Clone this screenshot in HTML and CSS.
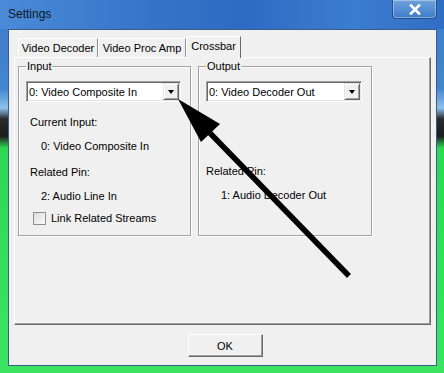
FILE: index.html
```html
<!DOCTYPE html>
<html lang="en">
<head>
  <meta charset="UTF-8">
  <title>Settings</title>
  <link rel="stylesheet" href="styles.css">
</head>
<body>
  <div class="window">
    <div class="titlebar">
      <span class="title">Settings</span>
      <div class="close">
        <svg width="14" height="11" viewBox="0 0 14 11">
          <path d="M3 1.5 L11 9.5 M11 1.5 L3 9.5" stroke="#fff" stroke-width="2.6" stroke-linecap="square"/>
        </svg>
      </div>
    </div>

    <div class="client">
      <div class="tabs">
        <div class="tab tab-decoder">Video Decoder</div>
        <div class="tab tab-proc">Video Proc Amp</div>
        <div class="tab tab-crossbar active">Crossbar</div>
      </div>

      <div class="panel">
        <fieldset class="group group-input">
          <legend>Input</legend>
          <div class="combo">
            <span class="combo-text">0: Video Composite In</span>
            <span class="combo-btn"><i class="caret"></i></span>
          </div>
          <div class="label first">Current Input:</div>
          <div class="value">0: Video Composite In</div>
          <div class="label">Related Pin:</div>
          <div class="value">2: Audio Line In</div>
          <label class="check">
            <span class="box"></span>
            Link Related Streams
          </label>
        </fieldset>

        <fieldset class="group group-output">
          <legend>Output</legend>
          <div class="combo">
            <span class="combo-text">0: Video Decoder Out</span>
            <span class="combo-btn"><i class="caret"></i></span>
          </div>
          <div class="label spaced">Related Pin:</div>
          <div class="value">1: Audio Decoder Out</div>
        </fieldset>
      </div>

      <div class="buttons">
        <button class="ok">OK</button>
      </div>
    </div>

    <!-- annotation arrow drawn over the dialog -->
    <svg class="arrow" width="444" height="373" viewBox="0 0 444 373">
      <line x1="349" y1="276" x2="207" y2="130" stroke="#000" stroke-width="5.5"/>
      <polygon points="178,99 220,124 201,142" fill="#000"/>
    </svg>
  </div>
</body>
</html>
```

FILE: styles.css
```css
body {
  margin: 0;
  font-family: 'Liberation Sans', Arial, sans-serif;
  font-size: 11px;
  color: #000;
}

.window {
  position: relative;
  width: 444px;
  height: 373px;
  overflow: hidden;
  background: linear-gradient(to bottom, #3d7ccc 0, #4384d0 88px, #8ec1ea 108px, #2a2a2a 119px, #1c1c1c 136px, #2fd853 148px, #3ae362 100%);
}

.titlebar {
  height: 29px;
  display: flex;
  justify-content: space-between;
  align-items: flex-start;
  background: linear-gradient(to right, #4a8ad7 0, #3474c8 35%, #2d6bc2 55%, #3b7dd0 80%, #2f6ec4 100%);
}

.title {
  padding: 7px 0 0 8px;
  font-size: 12px;
  line-height: 15px;
  color: #0b1626;
}

.close {
  width: 43px;
  height: 18px;
  margin-right: 7px;
  display: flex;
  align-items: center;
  justify-content: center;
  border: 1px solid #234f8c;
  border-top: none;
  border-radius: 0 0 4px 4px;
  background: linear-gradient(to bottom, #6fa2dc, #3e7bc9);
  box-shadow: inset 0 0 0 1px rgba(255, 255, 255, 0.35);
}

.client {
  box-sizing: border-box;
  width: 429px;
  height: 337px;
  margin-left: 8px;
  padding: 0 5px;
  background: #f0f0f0;
  border: 1px solid #3a5d88;
}

.tabs {
  display: flex;
  align-items: flex-end;
  height: 21px;
  margin: 6px 0 0 4px;
  position: relative;
  z-index: 1;
}

.tab {
  box-sizing: border-box;
  height: 19px;
  line-height: 19px;
  text-align: center;
  border-top: 1px solid #fff;
  border-left: 1px solid #fff;
  border-right: 1px solid #8e8e8e;
  white-space: nowrap;
}

.tab-decoder { width: 80px; }
.tab-proc { width: 88px; }
.tab-crossbar { width: 55px; }

.tab.active {
  height: 22px;
  line-height: 19px;
  margin-bottom: -1px;
  background: #f0f0f0;
  border-right-color: #696969;
}

.panel {
  box-sizing: border-box;
  height: 268px;
  display: flex;
  align-items: flex-start;
  gap: 7px;
  padding: 2px 0 0 3px;
  border-top: 1px solid #fff;
  border-left: 1px solid #fff;
  border-right: 1px solid #696969;
  border-bottom: 1px solid #696969;
  box-shadow: inset -1px -1px 0 #a0a0a0;
}

.group {
  box-sizing: border-box;
  height: 176px;
  margin: 0;
  padding: 0 7px;
  border: 1px solid #a3a3a3;
  box-shadow: inset 1px 1px 0 #fff, 1px 1px 0 #fff;
}

.group-input { width: 173px; }
.group-output { width: 174px; }

.group legend {
  padding: 0 1px;
  margin-left: 0;
  line-height: 13px;
  background: #f0f0f0;
}

.combo {
  box-sizing: border-box;
  display: flex;
  align-items: center;
  height: 21px;
  margin-top: 8px;
  background: #fff;
  border: 1px solid;
  border-color: #a0a0a0 #fff #fff #a0a0a0;
  box-shadow: inset 1px 1px 0 #696969, inset -1px -1px 0 #e3e3e3;
}

.group-input .combo { width: 155px; }
.group-output .combo { width: 156px; }

.combo-text {
  flex: 1;
  padding-left: 2px;
  white-space: nowrap;
}

.combo-btn {
  box-sizing: border-box;
  width: 16px;
  height: 17px;
  margin-right: 1px;
  display: flex;
  align-items: center;
  justify-content: center;
  background: #f0f0f0;
  border: 1px solid;
  border-color: #e3e3e3 #696969 #696969 #e3e3e3;
  box-shadow: inset 1px 1px 0 #fff, inset -1px -1px 0 #a0a0a0;
}

.caret {
  width: 0;
  height: 0;
  margin-top: 1px;
  border-left: 3px solid transparent;
  border-right: 3px solid transparent;
  border-top: 4px solid #000;
}

.label,
.value {
  height: 20px;
  line-height: 20px;
  white-space: nowrap;
}

.label { margin-top: 6px; }
.label.first { margin-top: 10px; }
.label.spaced { margin-top: 59px; }
.value { margin-top: 4px; }

.group-input .label { padding-left: 4px; }
.group-input .value { padding-left: 15px; }
.group-output .value { padding-left: 15px; }

.check {
  display: flex;
  align-items: center;
  gap: 5px;
  height: 20px;
  margin-top: 2px;
  padding-left: 7px;
}

.box {
  box-sizing: border-box;
  width: 13px;
  height: 13px;
  border: 1px solid #8f8f8f;
  background: linear-gradient(135deg, #dcdcdc, #fbfbfb);
}

.buttons {
  display: flex;
  justify-content: center;
  padding: 9px 0 0 5px;
}

.ok {
  box-sizing: border-box;
  width: 75px;
  height: 23px;
  font-family: inherit;
  font-size: 11px;
  color: #000;
  background: #f0f0f0;
  border: 1px solid;
  border-color: #fff #696969 #696969 #fff;
  box-shadow: inset -1px -1px 0 #a0a0a0;
  padding: 0;
}

.arrow {
  position: absolute;
  top: 0;
  left: 0;
  pointer-events: none;
}
```
